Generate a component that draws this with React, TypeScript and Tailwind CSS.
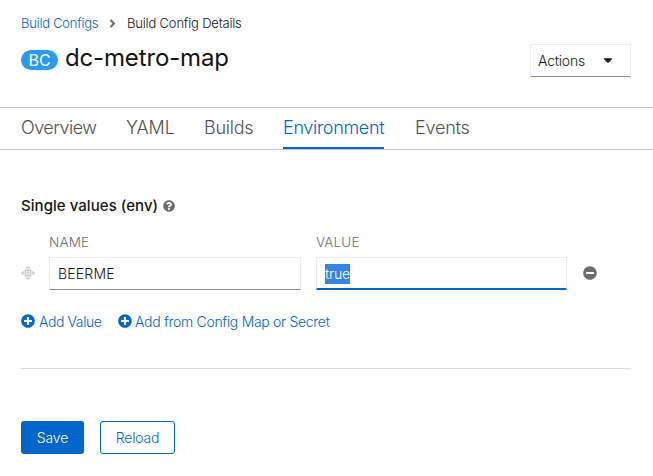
import React from "react";
import {
  FaAngleRight,
  FaCaretDown,
  FaMinusCircle,
  FaPlusCircle,
  FaQuestionCircle,
} from "react-icons/fa";

const tabs = [
  { label: "Overview", box: "w-[75px] tracking-[-0.5px]" },
  { label: "YAML", box: "w-[48px] tracking-[-0.1px]" },
  { label: "Builds", box: "w-[49px] tracking-[-0.25px]" },
  { label: "Environment", box: "w-[101px] tracking-[-0.32px]", active: true },
  { label: "Events", box: "ml-px w-[54px] tracking-[-0.2px]" },
];

function DragHandle() {
  return (
    <svg width="14" height="14" viewBox="0 0 14 14" fill="#c9c9c9">
      <path d="M7 0 9.6 2.6H4.4zM7 14 4.4 11.4h5.2zM0 7 2.6 4.4v5.2zM14 7 11.4 9.6V4.4z" />
      <path
        fillRule="evenodd"
        d="M4 3.6h6l.4.4v6l-.4.4H4l-.4-.4V4zM5 5v1.4h1.4V5zM7.6 5v1.4H9V5zM5 7.6V9h1.4V7.6zM7.6 7.6V9H9V7.6z"
      />
    </svg>
  );
}

export default function App() {
  return (
    <main className="h-[476px] w-[653px] overflow-hidden bg-white font-['Inter',sans-serif] text-[#151515]">
      <header className="flex h-[107px] justify-between pl-[21px] pr-[22px]">
        <div className="pt-[13px]">
          <nav className="flex h-5 items-center text-[13px] font-[350] leading-5 whitespace-nowrap">
            <a className="w-[77px] tracking-[-0.25px] text-[#06c]">Build Configs</a>
            <FaAngleRight className="mx-[8px] h-[13px] w-[13px] text-[#6a6e73]" />
            <span className="tracking-[-0.18px]">Build Config Details</span>
          </nav>
          <div className="mt-[6px] flex h-[46px] items-center">
            <span className="mt-[-5px] flex h-5 w-[37px] items-center justify-center rounded-full bg-[#2b9af3] pt-px text-[16px] text-white">
              BC
            </span>
            <h1 className="ml-[7px] mt-[-8px] text-[24px] leading-8 tracking-[-0.15px] whitespace-nowrap">
              dc-metro-map
            </h1>
          </div>
        </div>
        <button className="mt-11 flex h-[33px] w-[101px] items-center justify-between border border-[#ededed] border-b-[#8a8d90] pb-px pl-[7px] pr-[17px] text-[14px] font-[350] tracking-[-0.2px]">
          Actions
          <FaCaretDown className="h-[14px] w-[10px]" />
        </button>
      </header>

      <nav className="flex h-[43px] gap-[30px] border-y border-[#c8c8c8] pl-[21px] text-[18px] font-light leading-[40px] text-[#4f5255]">
        {tabs.map((tab) => (
          <a
            key={tab.label}
            className={`${tab.box} h-[41px] whitespace-nowrap ${
              tab.active ? "border-b-2 border-[#06c] text-[#06c]" : ""
            }`}
          >
            {tab.label}
          </a>
        ))}
      </nav>

      <section className="pl-[21px] pr-[22px] pt-[46px]">
        <h2 className="flex h-5 items-center text-[15px] font-medium whitespace-nowrap">
          <span className="w-[142px] tracking-[0.05px]">Single values (env)</span>
          <FaQuestionCircle className="h-3 w-3 text-[#6a6e73]" />
        </h2>
        <div className="mt-4 flex h-5 gap-[15px] pl-7 text-[13.5px] font-light leading-5 text-[#6a6e73]">
          <span className="w-[252px] tracking-[0.15px]">NAME</span>
          <span className="tracking-[0.15px]">VALUE</span>
        </div>
        <div className="mt-[5px] flex h-[33px] items-center text-[14px] font-[350]">
          <span className="mt-[-2px] w-7">
            <DragHandle />
          </span>
          <div className="flex h-[33px] w-[252px] items-center border border-[#ededed] border-b-[#8a8d90] pl-2 tracking-[0.2px]">
            BEERME
          </div>
          <div className="ml-[15px] flex h-[33px] w-[251px] items-center border border-b-2 border-[#ededed] border-b-[#06c] pl-2 pt-0.5">
            <span className="h-5 w-[25px] bg-[#3584e4] leading-5 tracking-[-0.15px] text-white">true</span>
          </div>
          <FaMinusCircle className="ml-4 mt-[-2px] h-[14px] w-[14px] text-[#6a6e73]" />
        </div>
        <div className="mt-[20px] flex h-[22px] items-center text-[14px] font-[350] text-[#06c] whitespace-nowrap">
          <FaPlusCircle className="h-[14px] w-[14px]" />
          <span className="ml-[4px] w-[63px] pt-px tracking-[-0.4px]">Add Value</span>
          <FaPlusCircle className="ml-4 h-[14px] w-[14px]" />
          <span className="ml-[3px] pt-px tracking-[-0.3px]">Add from Config Map or Secret</span>
        </div>
        <hr className="mt-[36px] border-[#dcdcdc]" />
        <div className="mt-[52px] flex gap-4 text-[14px] font-[350] tracking-[-0.15px]">
          <button className="h-[33px] w-[63px] rounded-[3px] bg-[#06c] text-white">Save</button>
          <button className="h-[33px] w-[75px] rounded-[3px] border border-[#06c] text-[#06c]">
            Reload
          </button>
        </div>
      </section>
    </main>
  );
}
